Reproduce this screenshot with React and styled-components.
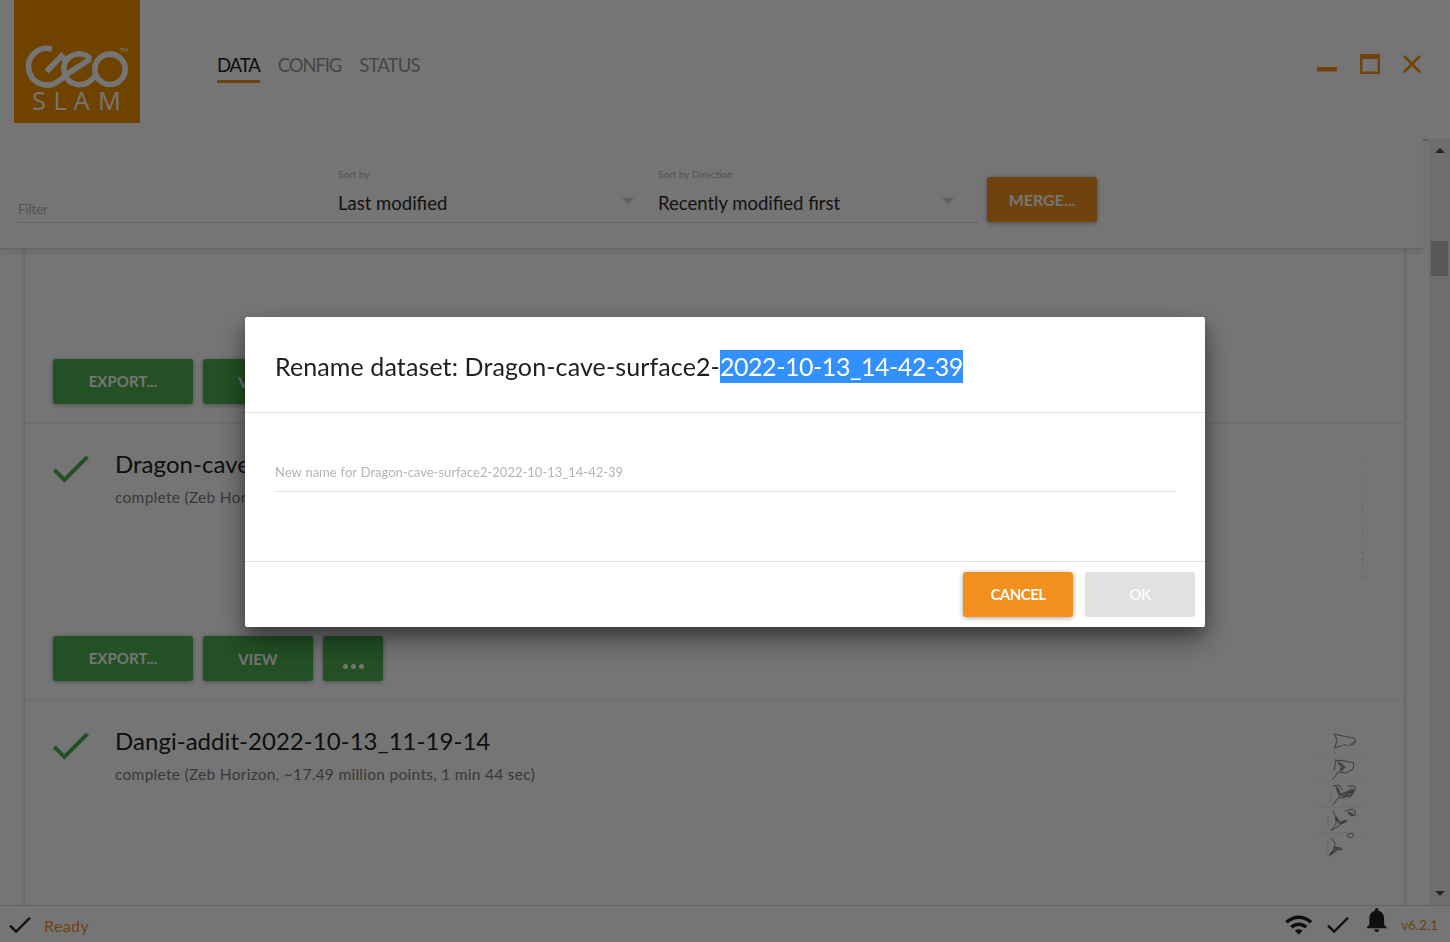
import React from "react";
import styled, { createGlobalStyle, ThemeProvider } from "styled-components";

const theme = {
  orange: "#f3901d",
  logo: "#f19100",
  green: "#4caf50",
  ink: "#212121",
  muted: "#7c7c7c",
  faint: "#b4b4b4",
  line: "#e0e0e0",
};

const GlobalStyle = createGlobalStyle`
  * { box-sizing: border-box; }
  body {
    margin: 0;
    overflow: hidden;
    background: #fff;
    font-family: Lato, "Open Sans", sans-serif;
    font-feature-settings: "liga" 1;
  }
`;

const Window = styled.div`
  display: flex;
  flex-direction: column;
  width: 1450px;
  height: 942px;
  overflow: hidden;
  background: #fff;
`;

const Header = styled.header`
  display: flex;
  align-items: flex-start;
  flex: 0 0 139px;
  padding: 0 29px 0 14px;
  box-shadow: 0 1px 2px rgba(0, 0, 0, 0.4);
`;

const Logo = styled.svg`
  display: block;
  width: 126px;
  height: 123px;
  background: ${(p) => p.theme.logo};
`;

const LogoText = styled.text`
  font-family: ${(p) => (p.$size > 10 ? '"Open Sans", Lato' : "Lato")}, sans-serif;
  font-size: ${(p) => p.$size}px;
  font-weight: ${(p) => (p.$bold ? 700 : 500)};
  fill: #fff;
`;

const Nav = styled.nav`
  display: flex;
  gap: 18px;
  margin: 53px auto 0 77px;
`;

const NavItem = styled.a`
  padding-bottom: 3px;
  border-bottom: 3px solid ${(p) => (p.$active ? p.theme.orange : "transparent")};
  color: ${(p) => (p.$active ? p.theme.ink : "#989898")};
  font-size: 18.5px;
  line-height: 24px;
  letter-spacing: ${(p) => p.$tracking}px;
`;

const WindowButtons = styled.div`
  display: flex;
  align-items: flex-start;
  gap: 23px;
  padding-top: 54px;
`;

const Minimize = styled.i`
  width: 20px;
  height: 5px;
  margin-top: 13px;
  border-bottom: 1px solid #f9c88e;
  border-top: 4px solid ${(p) => p.theme.orange};
`;

const Maximize = styled.i`
  width: 20px;
  height: 20px;
  border: 2px solid ${(p) => p.theme.orange};
  border-top-width: 5px;
  box-shadow: inset 0 -1px 0 #f9c88e, inset 1px 0 0 #f9c88e, inset -1px 0 0 #f9c88e;
`;

const CloseIcon = styled.svg`
  width: 18px;
  height: 20px;
  fill: none;
  stroke: ${(p) => p.theme.logo};
  stroke-width: 2.6;
`;

const Content = styled.div`
  display: flex;
  flex: 1;
  min-height: 0;
`;

const Pane = styled.main`
  display: flex;
  flex-direction: column;
  flex: 1;
  min-width: 0;
`;

const Toolbar = styled.section`
  position: relative;
  display: flex;
  align-items: flex-end;
  flex: 0 0 110px;
  width: 1423px;
  padding: 0 0 25px 18px;
  border-bottom: 1px solid #d8d8d8;
  background: #fff;
  box-shadow: 0 4px 5px rgba(0, 0, 0, 0.09);
`;

const Field = styled.div`
  display: flex;
  flex-direction: column;
  width: 320px;
  border-bottom: 1px solid #d8d8d8;
`;

const FilterText = styled.span`
  padding-bottom: 5px;
  color: ${(p) => p.theme.faint};
  font-size: 13px;
  line-height: 16px;
`;

const FieldLabel = styled.span`
  margin-bottom: 11px;
  color: ${(p) => p.theme.faint};
  font-size: 10px;
  line-height: 12px;
`;

const FieldValue = styled.span`
  display: flex;
  align-items: center;
  justify-content: space-between;
  padding: 0 24px 7px 0;
  color: #2b2b2b;
  font-size: 18.5px;
  line-height: 24px;
`;

const Caret = styled.i`
  margin-top: -4px;
  border: 6.5px solid transparent;
  border-top-color: #d0d0d0;
  border-bottom: 0;
`;

const Button = styled.button`
  width: ${(p) => p.$width}px;
  height: 45px;
  margin: 0;
  padding: 0;
  border: 0;
  border-radius: 3px;
  background: ${(p) => (p.disabled ? "#e1e1e1" : p.theme[p.$tone])};
  box-shadow: ${(p) => (p.disabled ? "none" : "0 1px 5px rgba(0, 0, 0, 0.36)")};
  color: ${(p) => (p.disabled ? "#fafafa" : "#fff")};
  font-family: inherit;
  font-size: ${(p) => p.$size || 15}px;
  font-weight: 700;
  line-height: 45px;
  letter-spacing: ${(p) => p.$tracking || 0}px;
`;

const MergeButton = styled(Button)`
  margin: 0 0 1px 9px;
`;

const ViewButton = styled(Button)`
  padding-top: 1px;
`;

const Dots = styled.span`
  display: inline-flex;
  gap: 3px;
  transform: translateY(5px);

  i {
    width: 5px;
    height: 5px;
    border-radius: 50%;
    background: currentColor;
  }
`;

const List = styled.div`
  display: flex;
  flex-direction: column;
  flex: 1;
  width: 1429px;
  padding: 0 25px;
  overflow: hidden;
`;

const Card = styled.article`
  display: flex;
  flex-direction: column;
  flex: 0 0 ${(p) => p.$height}px;
  padding: 20px 28px 20px 21px;
  border-radius: 2px;
  background: #fff;
  box-shadow: 0 1px 4px rgba(0, 0, 0, 0.28);
`;

const CardTop = styled.div`
  display: flex;
  align-items: flex-start;
`;

const CardText = styled.div`
  display: flex;
  flex-direction: column;
  flex: 1;
  gap: 7px;
  padding: 4px 0 0 20px;
`;

const CardTitle = styled.h2`
  margin: 0;
  color: ${(p) => p.theme.ink};
  font-size: 24px;
  font-weight: 400;
  line-height: 32px;
  letter-spacing: 0.04px;
`;

const CardInfo = styled.p`
  margin: 0;
  color: ${(p) => p.theme.muted};
  font-size: 15.5px;
  line-height: 20px;
  letter-spacing: 0.28px;
`;

const Actions = styled.div`
  display: flex;
  gap: 10px;
  margin-top: auto;
  padding-left: 7px;
`;

const Icon = styled.svg`
  flex: none;
  width: ${(p) => p.$size}px;
  height: ${(p) => p.$size}px;
  margin-top: ${(p) => p.$shift || 0}px;
  fill: ${(p) => p.theme[p.$tone]};
`;

const Preview = styled.svg`
  width: 60px;
  height: 140px;
  margin-bottom: -60px;
  fill: none;
  stroke: #333;
  stroke-linejoin: round;
  stroke-linecap: round;
`;

const Scrollbar = styled.aside`
  display: flex;
  flex-direction: column;
  align-items: center;
  width: 21px;
  padding: 9px 0;
  background: #efefef;
`;

const Arrow = styled.i`
  border: 5px solid transparent;
  border-top: ${(p) => (p.$up ? "0" : "5px solid #505050")};
  border-bottom: ${(p) => (p.$up ? "5px solid #505050" : "0")};
`;

const Thumb = styled.i`
  width: 17px;
  height: 35px;
  margin: 88px 0 auto;
  background: #c1c1c1;
`;

const StatusBar = styled.footer`
  display: flex;
  align-items: flex-start;
  flex: 0 0 37px;
  padding: 4px 12px 0 5px;
  border-top: 1px solid #d8d8d8;
`;

const Ready = styled.span`
  margin: 0 auto 0 9.5px;
  color: ${(p) => p.theme.orange};
  font-size: 16px;
  line-height: 31px;
  letter-spacing: 0.4px;
`;

const StatusIcons = styled.div`
  display: flex;
  gap: 9.5px;
`;

const Version = styled.span`
  color: ${(p) => p.theme.orange};
  font-size: 13.5px;
  line-height: 30px;
`;

const Backdrop = styled.div`
  position: fixed;
  inset: 0 auto auto 0;
  display: flex;
  justify-content: center;
  align-items: flex-start;
  width: 1450px;
  height: 942px;
  padding-top: 317px;
  background: rgba(0, 0, 0, 0.54);
`;

const Dialog = styled.div`
  display: flex;
  flex-direction: column;
  width: 960px;
  height: 310px;
  border-radius: 2px;
  background: #fff;
  box-shadow: 0 13px 30px rgba(0, 0, 0, 0.42), 0 7px 14px rgba(0, 0, 0, 0.22);
`;

const DialogTitle = styled.h1`
  flex: 0 0 96px;
  margin: 0;
  padding: 33px 30px 0;
  border-bottom: 1px solid ${(p) => p.theme.line};
  color: ${(p) => p.theme.ink};
  font-size: 25px;
  font-weight: 400;
  line-height: 33px;
  letter-spacing: 0.11px;
`;

const Selected = styled.mark`
  display: inline-block;
  background: #3390ff;
  color: #fff;
  letter-spacing: -0.46px;
`;

const DialogBody = styled.div`
  flex: 1;
  padding: 51px 30px 0;
`;

const NameField = styled.div`
  height: 28px;
  border-bottom: 1px solid ${(p) => p.theme.line};
  color: #b4b4b4;
  font-size: 13px;
  line-height: 16px;
  word-spacing: 0.6px;
`;

const DialogFooter = styled.div`
  display: flex;
  justify-content: flex-end;
  gap: 12px;
  flex: 0 0 66px;
  padding: 10px;
  border-top: 1px solid ${(p) => p.theme.line};
`;

const CHECK = "M9 16.2L4.8 12l-1.4 1.4L9 19 21 7l-1.4-1.4L9 16.2z";
const WIFI =
  "M1 9l2 2c4.97-4.97 13.03-4.97 18 0l2-2C16.93 2.93 7.08 2.93 1 9zm8 8l3 3 3-3c-1.65-1.66-4.34-1.66-6 0zm-4-4l2 2c2.76-2.76 7.24-2.76 10 0l2-2C15.14 9.14 8.87 9.14 5 13z";
const BELL =
  "M12 22c1.1 0 2-.9 2-2h-4c0 1.1.89 2 2 2zm6-6v-5c0-3.07-1.64-5.64-4.5-6.32V4c0-.83-.67-1.5-1.5-1.5s-1.5.67-1.5 1.5v.68C7.63 5.36 6 7.92 6 11v5l-2 2v1h16v-1l-2-2z";

function Glyph({ d, size = 29.5, tone = "ink", shift }) {
  return (
    <Icon viewBox="0 0 24 24" $size={size} $tone={tone} $shift={shift}>
      <path d={d} />
    </Icon>
  );
}

function GeoSlamLogo() {
  return (
    <Logo viewBox="14 0 126 123">
      <g fill="none" stroke="#fff" strokeWidth="5.6">
        <path d="M52 49A18.6 18.3 0 1 0 58 81.5Q62 79 65.5 75L90.5 59" />
        <path d="M46.5 71.5L61.5 56L65.5 60.5" />
        <path d="M90.5 59A15.4 15.4 0 0 0 64 66Q63 82 78 84.6Q88 85.5 95 76" />
        <circle cx="110" cy="69.3" r="15.2" />
      </g>
      <LogoText x="120" y="52" $size={5} $bold>TM</LogoText>
      <LogoText x="32 53.5 73.5 98" y="110" $size={25.5}>SLAM</LogoText>
    </Logo>
  );
}

function SurfacePreview() {
  return (
    <Preview viewBox="1316 443 60 140">
      <path d="M1362 454V520" strokeOpacity=".06" strokeDasharray="2 4" strokeLinecap="butt" />
      <path d="M1362.5 485V580" strokeOpacity=".17" strokeDasharray="2 4" strokeLinecap="butt" />
      <path d="M1362.5 540V580" strokeOpacity=".2" strokeDasharray="1.5 4.5" strokeLinecap="butt" />
    </Preview>
  );
}

function SlicesPreview() {
  return (
    <Preview viewBox="1316 720 60 140">
      <path d="M1316 756.5h50M1316 781.5h50M1316 806.5h50M1316 831.5h50" strokeOpacity=".07" />
      <g strokeOpacity=".6" strokeWidth="1">
        <path d="M1334 733l9 2 11 2 2 4-4 3M1347 744l-4 0M1341 745l-7 2M1335 734l2 5-2 7M1349 745l5-4" />
        <path d="M1334 759l11 1 9 2-1 6-7 4-8-1-4 6-2 2M1336 760l-2 9" />
        <path d="M1333 785l6-1 3 5M1348 785h7v5l-7 2M1346 796l-8 1-5 7" />
        <path d="M1333 810l3 6v7l-5 6M1345 810l7-2 3 2v5l-5-1M1345 820l-6 5-7 4" />
        <path d="M1331 837l4 5-1 6-5 7M1347 834l5-2 2 2-3 3-4-2" />
      </g>
      <g strokeOpacity=".5" strokeWidth="2.8">
        <path d="M1339 762l4 3-2 4 3-3-4-3" />
        <path d="M1337 787l3 7 6-2 6-3M1343 794l7 1 3-4" />
        <path d="M1336 817l4 5 6-2M1349 812l3 1" />
        <path d="M1335 847l6 1M1331 853l5-4" />
      </g>
      <path
        d="M1335 751v4M1331 791l-1 9M1328 815v11M1328 841v10"
        strokeOpacity=".3"
        strokeDasharray="2 2"
      />
    </Preview>
  );
}

function DatasetCard({ title, info, height = 277, preview, actions = true }) {
  return (
    <Card $height={height}>
      {title && (
        <CardTop>
          <Glyph d={CHECK} size={49} tone="green" />
          <CardText>
            <CardTitle>{title}</CardTitle>
            <CardInfo>{info}</CardInfo>
          </CardText>
          {preview}
        </CardTop>
      )}
      {actions && (
        <Actions>
          <Button $tone="green" $width={140} $tracking={0.05}>EXPORT...</Button>
          <ViewButton $tone="green" $width={110}>VIEW</ViewButton>
          <Button $tone="green" $width={60} aria-label="More">
            <Dots><i /><i /><i /></Dots>
          </Button>
        </Actions>
      )}
    </Card>
  );
}

export default function App() {
  return (
    <ThemeProvider theme={theme}>
      <GlobalStyle />
      <Window>
        <Header>
          <GeoSlamLogo />
          <Nav>
            <NavItem $active $tracking={-1.1}>DATA</NavItem>
            <NavItem $tracking={-1.1}>CONFIG</NavItem>
            <NavItem $tracking={-0.85}>STATUS</NavItem>
          </Nav>
          <WindowButtons>
            <Minimize />
            <Maximize />
            <CloseIcon viewBox="0 0 18 20">
              <path d="M.9 1.9l16.2 16.4M17.1 1.9L.9 18.3" />
            </CloseIcon>
          </WindowButtons>
        </Header>
        <Content>
          <Pane>
            <Toolbar>
              <Field><FilterText>Filter</FilterText></Field>
              <Field>
                <FieldLabel>Sort by</FieldLabel>
                <FieldValue>Last modified<Caret /></FieldValue>
              </Field>
              <Field>
                <FieldLabel>Sort by Direction</FieldLabel>
                <FieldValue>Recently modified first<Caret /></FieldValue>
              </Field>
              <MergeButton $tone="orange" $width={110} $size={16}>MERGE...</MergeButton>
            </Toolbar>
            <List>
              <DatasetCard height={175} />
              <DatasetCard
                title="Dragon-cave-surface2-2022-10-13_14-42-39"
                info="complete (Zeb Horizon)"
                preview={<SurfacePreview />}
              />
              <DatasetCard
                title="Dangi-addit-2022-10-13_11-19-14"
                info="complete (Zeb Horizon, ~17.49 million points, 1 min 44 sec)"
                preview={<SlicesPreview />}
                actions={false}
              />
            </List>
          </Pane>
          <Scrollbar>
            <Arrow $up />
            <Thumb />
            <Arrow />
          </Scrollbar>
        </Content>
        <StatusBar>
          <Glyph d={CHECK} />
          <Ready>Ready</Ready>
          <StatusIcons>
            <Glyph d={WIFI} />
            <Glyph d={CHECK} />
            <Glyph d={BELL} shift={-5} />
            <Version>v6.2.1</Version>
          </StatusIcons>
        </StatusBar>
      </Window>
      <Backdrop>
        <Dialog>
          <DialogTitle>
            Rename dataset: Dragon-cave-surface2-<Selected>2022-10-13_14-42-39</Selected>
          </DialogTitle>
          <DialogBody>
            <NameField>New name for Dragon-cave-surface2-2022-10-13_14-42-39</NameField>
          </DialogBody>
          <DialogFooter>
            <Button $tone="orange" $width={110} $tracking={-0.5}>CANCEL</Button>
            <Button disabled $width={110} $tracking={-0.8}>OK</Button>
          </DialogFooter>
        </Dialog>
      </Backdrop>
    </ThemeProvider>
  );
}
